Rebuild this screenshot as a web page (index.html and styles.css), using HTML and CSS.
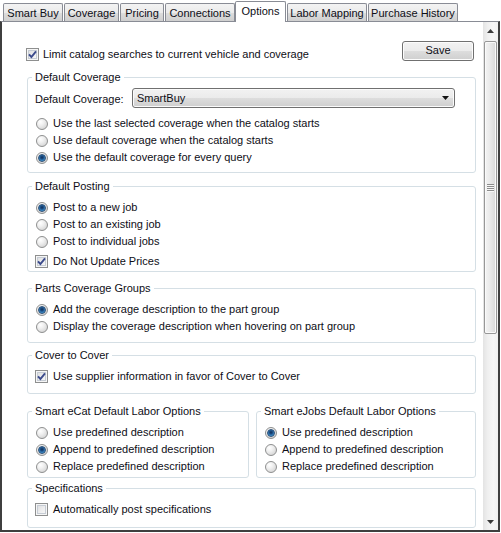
FILE: index.html
```html
<!DOCTYPE html>
<html>
<head>
<meta charset="utf-8">
<link rel="stylesheet" href="styles.css">
</head>
<body>
<div class="window">
  <div class="tabs">
    <div class="tab t1">Smart Buy</div>
    <div class="tab t2">Coverage</div>
    <div class="tab t3">Pricing</div>
    <div class="tab t4">Connections</div>
    <div class="tab active t5">Options</div>
    <div class="tab t6">Labor Mapping</div>
    <div class="tab t7">Purchase History</div>
  </div>
  <div class="panel">
    <div class="content">
      <div class="top-row">
        <label class="opt top-opt"><span class="cb checked"><svg viewBox="0 0 11 11"><path d="M2 5.3 L4.4 8 L9 2.3"/></svg></span>Limit catalog searches to current vehicle and coverage</label>
        <div class="btn">Save</div>
      </div>

      <fieldset class="group g-cov">
        <legend>Default Coverage</legend>
        <div class="select-row">
          <span class="sel-label">Default Coverage:</span>
          <div class="select"><span>SmartBuy</span><svg viewBox="0 0 7 4"><polygon points="0,0 7,0 3.5,4"/></svg></div>
        </div>
        <div class="opts">
          <label class="opt"><span class="rb"></span>Use the last selected coverage when the catalog starts</label>
          <label class="opt"><span class="rb"></span>Use default coverage when the catalog starts</label>
          <label class="opt"><span class="rb on"></span>Use the default coverage for every query</label>
        </div>
      </fieldset>

      <fieldset class="group g-post">
        <legend>Default Posting</legend>
        <label class="opt"><span class="rb on"></span>Post to a new job</label>
        <label class="opt"><span class="rb"></span>Post to an existing job</label>
        <label class="opt"><span class="rb"></span>Post to individual jobs</label>
        <label class="opt cb-opt after-radios"><span class="cb checked"><svg viewBox="0 0 11 11"><path d="M2 5.3 L4.4 8 L9 2.3"/></svg></span>Do Not Update Prices</label>
      </fieldset>

      <fieldset class="group g-parts">
        <legend>Parts Coverage Groups</legend>
        <label class="opt"><span class="rb on"></span>Add the coverage description to the part group</label>
        <label class="opt"><span class="rb"></span>Display the coverage description when hovering on part group</label>
      </fieldset>

      <fieldset class="group g-c2c">
        <legend>Cover to Cover</legend>
        <label class="opt cb-opt"><span class="cb checked"><svg viewBox="0 0 11 11"><path d="M2 5.3 L4.4 8 L9 2.3"/></svg></span>Use supplier information in favor of Cover to Cover</label>
      </fieldset>

      <div class="pair">
        <fieldset class="group g-labor">
          <legend>Smart eCat Default Labor Options</legend>
          <label class="opt"><span class="rb"></span>Use predefined description</label>
          <label class="opt"><span class="rb on"></span>Append to predefined description</label>
          <label class="opt"><span class="rb"></span>Replace predefined description</label>
        </fieldset>
        <fieldset class="group g-labor">
          <legend>Smart eJobs Default Labor Options</legend>
          <label class="opt"><span class="rb on"></span>Use predefined description</label>
          <label class="opt"><span class="rb"></span>Append to predefined description</label>
          <label class="opt"><span class="rb"></span>Replace predefined description</label>
        </fieldset>
      </div>

      <fieldset class="group g-spec">
        <legend>Specifications</legend>
        <label class="opt cb-opt"><span class="cb"></span>Automatically post specifications</label>
      </fieldset>
    </div>
    <div class="scrollbar">
      <div class="sb-btn"><svg viewBox="0 0 7 4"><polygon points="0,4 7,4 3.5,0"/></svg></div>
      <div class="sb-track">
        <div class="sb-thumb"><span class="grip"></span></div>
      </div>
      <div class="sb-btn"><svg viewBox="0 0 7 4"><polygon points="0,0 7,0 3.5,4"/></svg></div>
    </div>
  </div>
</div>
</body>
</html>
```

FILE: styles.css
```css
html, body {
  margin: 0;
  padding: 0;
  background: #ffffff;
}
body {
  font-family: "Liberation Sans", Arial, sans-serif;
  font-size: 11px;
  color: #0e0e16;
  width: 501px;
  height: 533px;
  overflow: hidden;
}
.window {
  width: 500px;
}

/* Tabs */
.tabs {
  display: flex;
  align-items: flex-start;
  gap: 1px;
  height: 21px;
  padding-left: 3px;
}
.tab {
  box-sizing: border-box;
  margin-top: 3px;
  height: 18px;
  border: 1px solid #898c95;
  border-bottom: none;
  border-radius: 2px 2px 0 0;
  background: linear-gradient(to bottom, #f3f3f3 0%, #ebebeb 50%, #dddddd 51%, #cfcfcf 100%);
  text-align: center;
  line-height: 13px;
  padding-top: 3px;
  white-space: nowrap;
}
.tab.active {
  margin-top: 1px;
  height: 21px;
  background: #ffffff;
  margin-left: -1px;
  position: relative;
  z-index: 1;
  padding-top: 3px;
}
.t1 { width: 60px; }
.t2 { width: 55px; }
.t3 { width: 44px; }
.t4 { width: 70px; }
.t5 { width: 51px; }
.t6 { width: 80px; }
.t7 { width: 90px; }

/* Panel */
.panel {
  box-sizing: border-box;
  height: 511px;
  border-top: 1px solid #898c95;
  border-left: 2px solid #3f3f3f;
  border-right: 2px solid #3f3f3f;
  border-bottom: 2px solid #3f3f3f;
  display: flex;
  background: #ffffff;
}
.content {
  width: 481px;
  overflow: hidden;
  display: flex;
  flex-direction: column;
}

/* Options */
.opt {
  display: flex;
  align-items: center;
  gap: 5px;
  height: 17px;
  line-height: 13px;
  white-space: nowrap;
}
.rb {
  box-sizing: border-box;
  width: 12px;
  height: 12px;
  flex: 0 0 12px;
  border: 1px solid #8e8f8f;
  border-radius: 50%;
  background: radial-gradient(circle at 35% 30%, #ffffff 0%, #f0f0f0 35%, #d6d6d6 80%, #c8c8c8 100%);
  display: flex;
  align-items: center;
  justify-content: center;
}
.rb.on::after {
  content: "";
  width: 6px;
  height: 6px;
  border-radius: 50%;
  border: 0.5px solid #2a4d74;
  background: radial-gradient(circle at 50% 40%, #0f2f58 0%, #1e4f86 35%, #3d8fcc 70%, #8fd0f4 100%);
}
.cb {
  box-sizing: border-box;
  width: 13px;
  height: 13px;
  flex: 0 0 13px;
  border: 1px solid #8e8f8f;
  background: linear-gradient(135deg, #d8d9db 0%, #eeeeef 55%, #fbfbfb 100%);
  box-shadow: inset 0 0 0 1px #f6f6f6, inset 0 0 0 2px #c6ccd4;
  display: flex;
}
.cb svg {
  width: 11px;
  height: 11px;
}
.cb path {
  fill: none;
  stroke: #3c4b8c;
  stroke-width: 1.9;
  stroke-linejoin: miter;
}
.cb-opt .cb {
  margin-left: -1px;
}
.after-radios {
  margin-top: 3px;
}

/* Top row */
.top-row {
  display: flex;
  align-items: flex-end;
  justify-content: space-between;
  padding: 19px 9px 0 24px;
}
.top-row .top-opt {
  height: 13px;
  gap: 4px;
}
.btn {
  box-sizing: border-box;
  width: 72px;
  height: 20px;
  border: 1px solid #707070;
  border-radius: 3px;
  background: linear-gradient(to bottom, #f2f2f2 0%, #ebebeb 50%, #dddddd 51%, #cfcfcf 100%);
  box-shadow: inset 0 0 0 1px #fcfcfc;
  text-align: center;
  line-height: 17px;
  font-size: 11px;
}

/* Group boxes */
.group {
  border: 1px solid #d5dfe5;
  border-radius: 3px;
  margin: 0 7px 0 25px;
  padding: 6px 0 0 8px;
  min-width: 0;
}
.group legend {
  margin-left: -4px;
  padding: 0 3px;
  line-height: 13px;
  white-space: nowrap;
}
.g-cov { margin-top: 10px; padding-top: 4px; padding-bottom: 6px; }
.g-post { margin-top: 7px; padding-bottom: 1px; }
.g-parts { margin-top: 10px; padding-bottom: 7px; }
.g-c2c { margin-top: 6px; padding-bottom: 8px; }
.g-spec { margin-top: 4px; padding-bottom: 9px; }

.pair {
  display: grid;
  grid-template-columns: 222px 1fr;
  gap: 7px;
  margin: 11px 7px 0 25px;
}
.pair .group {
  margin: 0;
}
.g-labor { padding-bottom: 2px; }

/* Select */
.select-row {
  display: flex;
  align-items: center;
  margin-left: -1px;
}
.sel-label {
  flex: 0 0 97px;
  line-height: 13px;
  padding-top: 2px;
}
.select {
  box-sizing: border-box;
  flex: 1;
  height: 20px;
  margin-right: 20px;
  border: 1px solid #707070;
  border-radius: 3px;
  background: linear-gradient(to bottom, #f2f2f2 0%, #ebebeb 50%, #dddddd 51%, #cfcfcf 100%);
  box-shadow: inset 0 0 0 1px #fbfbfb;
  display: flex;
  align-items: center;
  justify-content: space-between;
  padding: 0 5px 0 4px;
}
.select svg {
  width: 7px;
  height: 4px;
  fill: #111111;
}
.opts {
  margin-top: 7px;
}

/* Scrollbar */
.scrollbar {
  width: 15px;
  display: flex;
  flex-direction: column;
  background: linear-gradient(to right, #e3e3e3 0%, #efefef 30%, #f6f6f6 70%, #f0f0f0 100%);
}
.sb-btn {
  height: 17px;
  display: flex;
  align-items: center;
  justify-content: center;
}
.sb-btn svg {
  width: 7px;
  height: 4px;
  fill: #3a3a3a;
}
.sb-track {
  flex: 1;
  padding-top: 2px;
}
.sb-thumb {
  box-sizing: border-box;
  height: 293px;
  margin: 0 1px 0 1px;
  border: 1px solid #979797;
  border-radius: 2px;
  background: linear-gradient(to right, #f4f4f4 0%, #e8e8e8 50%, #d9d9d9 100%);
  box-shadow: inset 0 0 0 1px #fafafa;
  display: flex;
  align-items: center;
  justify-content: center;
}
.grip {
  width: 7px;
  height: 8px;
  background: repeating-linear-gradient(to bottom, #8c8c8c 0px, #8c8c8c 1px, #f8f8f8 1px, #f8f8f8 2px);
}
```
